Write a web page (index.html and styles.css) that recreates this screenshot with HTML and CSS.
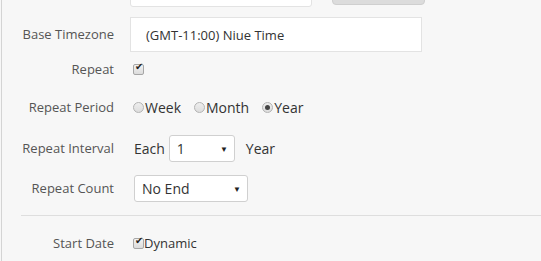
FILE: index.html
```html
<!DOCTYPE html>
<html lang="en">
<head>
    <meta charset="UTF-8">
    <title>Schedule</title>
    <link rel="stylesheet" href="styles.css">
</head>
<body>

<div class="panel">
    <div class="row row-top">
        <div class="label"></div>
        <input type="text" class="text-input short">
        <button type="button" class="btn"></button>
    </div>

    <div class="row row-tz">
        <div class="label">Base Timezone</div>
        <input type="text" class="text-input wide" value="(GMT-11:00) Niue Time">
    </div>

    <div class="row row-repeat">
        <div class="label">Repeat</div>
        <input type="checkbox" class="check" checked>
    </div>

    <div class="row row-period">
        <div class="label">Repeat Period</div>
        <label class="option"><input type="radio" name="period" class="radio">Week</label>
        <label class="option"><input type="radio" name="period" class="radio">Month</label>
        <label class="option"><input type="radio" name="period" class="radio" checked>Year</label>
    </div>

    <div class="row row-interval">
        <div class="label">Repeat Interval</div>
        <span class="value">Each</span>
        <div class="select-wrap small">
            <select class="select">
                <option>1</option>
                <option>2</option>
                <option>3</option>
            </select>
        </div>
        <span class="value unit">Year</span>
    </div>

    <div class="row row-count">
        <div class="label">Repeat Count</div>
        <div class="select-wrap medium">
            <select class="select">
                <option>No End</option>
                <option>Count</option>
            </select>
        </div>
    </div>

    <hr class="divider">

    <div class="row row-start">
        <div class="label">Start Date</div>
        <label class="option tight"><input type="checkbox" class="check" checked>Dynamic</label>
    </div>
</div>

</body>
</html>
```

FILE: styles.css
```css
body {
    margin: 0;
    padding: 0;
    background-color: #f7f7f7;
    font-family: "Open Sans", Arial, sans-serif;
    font-size: 13px;
    color: #333;
    overflow: hidden;
}

.panel {
    margin-left: 1px;
    margin-top: -28px;
    border-left: 1px solid #d4d4d4;
    min-height: calc(100vh + 28px);
}

.row {
    display: flex;
    align-items: center;
}

.label {
    width: 112px;
    flex: none;
    text-align: right;
    color: #555;
    margin-right: 19px;
}

.row-top {
    height: 35px;
    margin-bottom: 10px;
}

.row-top .label,
.row-tz .label {
    margin-right: 16px;
}

.row-tz {
    height: 35px;
}

.row-tz .label {
    position: relative;
    top: -1px;
}

.row-repeat {
    height: 34px;
}

.row-period {
    height: 42px;
}

.row-interval {
    height: 40px;
}

.row-count {
    height: 40px;
}

.row-start {
    height: 34px;
    margin-top: 10px;
}

.text-input {
    height: 35px;
    box-sizing: border-box;
    border: 1px solid #e3e3e3;
    background-color: #fff;
    padding: 0 15px;
    font-family: inherit;
    font-size: 13px;
    color: #333;
    outline: none;
}

.text-input.short {
    width: 182px;
    border-radius: 0 0 3px 3px;
}

.text-input.wide {
    width: 292px;
}

.btn {
    margin-left: 20px;
    width: 93px;
    height: 33px;
    align-self: flex-start;
    background-color: #dcdcdc;
    border: 1px solid #cfcfcf;
    border-radius: 4px;
}

.check,
.radio {
    appearance: none;
    -webkit-appearance: none;
    margin: 0;
    width: 11px;
    height: 11px;
    box-sizing: border-box;
    border: 1px solid #a6a6a6;
    background: linear-gradient(#f2f2f2, #dcdcdc);
    position: relative;
    flex: none;
}

.check {
    border-radius: 2px;
}

.check:checked::after {
    content: "\2714";
    position: absolute;
    left: 1px;
    top: -4px;
    font-size: 10px;
    font-family: "DejaVu Sans", sans-serif;
    color: #222;
}

.radio {
    border-radius: 50%;
    margin-right: 1px;
    background: linear-gradient(#eeeeee, #dddddd);
    border-color: #b3b3b3;
}

.radio:checked::after {
    content: "";
    position: absolute;
    left: 2px;
    top: 2px;
    width: 5px;
    height: 5px;
    border-radius: 50%;
    background-color: #444;
}

.option {
    display: flex;
    align-items: center;
    margin-right: 13px;
    font-size: 14px;
    color: #333;
}

.option.tight {
    font-size: 13px;
}

.value {
    font-size: 14px;
    color: #333;
    margin-left: 1px;
}

.unit {
    margin-left: 11px;
}

.select-wrap {
    position: relative;
    margin-left: 4px;
}

.select-wrap::after {
    content: "\25BC";
    position: absolute;
    right: 7px;
    top: 8px;
    font-size: 8px;
    color: #222;
    pointer-events: none;
}

.select {
    appearance: none;
    -webkit-appearance: none;
    height: 27px;
    box-sizing: border-box;
    border: 1px solid #d0d0d0;
    border-radius: 3px;
    background-color: #fff;
    font-family: inherit;
    font-size: 14px;
    color: #333;
    padding: 0 7px;
    outline: none;
}

.select-wrap.small .select {
    width: 66px;
}

.select-wrap.medium {
    margin-left: 1px;
}

.select-wrap.medium .select {
    width: 114px;
}

.divider {
    margin: 7px 0 0 19px;
    border: none;
    border-top: 1px solid #dedede;
}
```
